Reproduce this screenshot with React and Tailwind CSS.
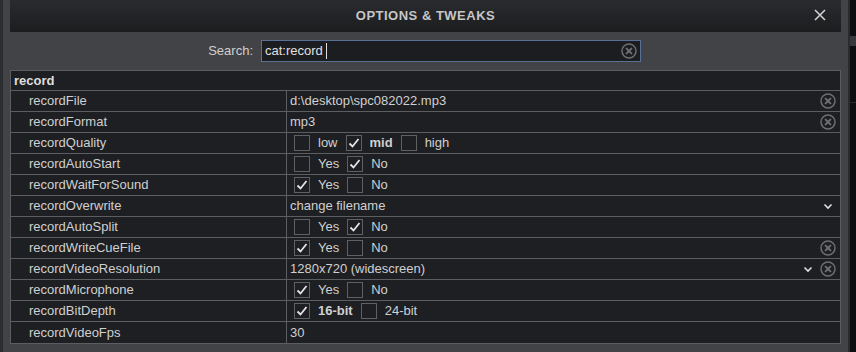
import React from "react";

const FONT = { fontFamily: '"Liberation Sans", Arial, sans-serif' };

function ClearIcon() {
  return (
    <svg width="16" height="16" viewBox="0 0 16 16" className="shrink-0">
      <circle cx="8" cy="8" r="7" fill="none" stroke="#6e6e70" strokeWidth="1.5" />
      <path d="M5.6 5.6 L10.4 10.4 M10.4 5.6 L5.6 10.4" stroke="#6e6e70" strokeWidth="2" strokeLinecap="round" />
    </svg>
  );
}

function Chevron() {
  return (
    <svg width="10" height="7" viewBox="0 0 10 7" className="shrink-0">
      <path d="M1.5 1.5 L5 5 L8.5 1.5" fill="none" stroke="#e0e0e0" strokeWidth="1.6" />
    </svg>
  );
}

function Box({ checked }) {
  return (
    <span className="w-[16px] h-[16px] border border-[#5f6064] flex items-center justify-center shrink-0">
      {checked && (
        <svg width="12" height="12" viewBox="0 0 12 12">
          <path d="M1.5 6.5 L4.5 9.5 L10.5 2" fill="none" stroke="#e6e6e6" strokeWidth="1.8" />
        </svg>
      )}
    </span>
  );
}

function Checks({ items }) {
  return (
    <div className="flex items-center pl-[4px]">
      {items.map((it, i) => (
        <div key={i} className="flex items-center">
          <Box checked={it.c} />
          <span className={"ml-[8px] mr-[8px] " + (it.b ? "font-bold" : "")}>{it.l}</span>
        </div>
      ))}
    </div>
  );
}

const yn = (yes) => [
  { l: "Yes", c: yes, b: false },
  { l: "No", c: !yes, b: false },
];

const rows = [
  { n: "recordFile", v: "d:\\desktop\\spc082022.mp3", clear: true },
  { n: "recordFormat", v: "mp3", clear: true },
  {
    n: "recordQuality",
    checks: [
      { l: "low", c: false },
      { l: "mid", c: true, b: true },
      { l: "high", c: false },
    ],
  },
  { n: "recordAutoStart", checks: yn(false) },
  { n: "recordWaitForSound", checks: yn(true) },
  { n: "recordOverwrite", v: "change filename", chev: true },
  { n: "recordAutoSplit", checks: yn(false) },
  { n: "recordWriteCueFile", checks: yn(true), clear: true },
  { n: "recordVideoResolution", v: "1280x720 (widescreen)", chev: true, clear: true },
  { n: "recordMicrophone", checks: yn(true) },
  {
    n: "recordBitDepth",
    checks: [
      { l: "16-bit", c: true, b: true },
      { l: "24-bit", c: false, b: false },
    ],
  },
  { n: "recordVideoFps", v: "30" },
];

export default function App() {
  return (
    <div className="w-[856px] h-[352px] flex bg-[#0d0e10] overflow-hidden text-[13px] text-[#d0d0d0]" style={FONT}>
      <div className="w-[3px] bg-[#2c2d31]" />
      <div className="w-[845px] bg-[#424347] px-[7px] flex flex-col">
        <div className="h-[32px] bg-gradient-to-b from-[#2a2b2e] to-[#1c1d1f] flex items-center relative">
          <div className="flex-1 text-center font-bold text-[13px] tracking-[0.5px] text-[#c6c6c6]">OPTIONS &amp; TWEAKS</div>
          <div className="absolute right-[14px] top-[8px]">
            <svg width="14" height="14" viewBox="0 0 14 14">
              <path d="M2 2 L12 12 M12 2 L2 12" stroke="#cfcfcf" strokeWidth="1.6" />
            </svg>
          </div>
        </div>
        <div className="h-[38px] flex items-center">
          <div className="w-[251px] text-right text-[#d0d0d0] pr-[8px]">Search:</div>
          <div className="w-[380px] h-[22px] bg-[#1c1d20] border border-[#5b7096] flex items-center pl-[3px] pr-[3px]">
            <span className="text-[#e0e0e0]">cat:record</span>
            <span className="ml-[3px] w-[1px] h-[16px] bg-[#e0e0e0]" />
            <div className="flex-1" />
            <ClearIcon />
          </div>
        </div>
        <div className="border border-[#5c5d61] bg-[#1e1f22]">
          <div className="h-[20px] flex items-center pl-[3px] font-bold text-[#dedede] border-b border-[#5c5d61]">record</div>
          {rows.map((r, i) => (
            <div key={i} className={"h-[21px] flex " + (i < rows.length - 1 ? "border-b border-[#5c5d61]" : "")}>
              <div className="w-[276px] border-r border-[#5c5d61] pl-[18px] flex items-center">{r.n}</div>
              <div className="flex-1 flex items-center pl-[3px] pr-[4px]">
                {r.checks ? <Checks items={r.checks} /> : <span>{r.v}</span>}
                <div className="flex-1" />
                {r.chev && <span className={r.clear ? "mr-[7px]" : "mr-[3px]"}><Chevron /></span>}
                {r.clear && <ClearIcon />}
              </div>
            </div>
          ))}
        </div>
      </div>
      <div className="flex-1 flex">
        <div className="w-[2px] bg-[#2a2b2e]" />
        <div className="flex-1 flex flex-col">
          <div className="h-[36px]" />
          <div className="h-[10px] bg-[#38393c]" />
          <div className="h-[56px]" />
          <div className="h-[1px] bg-[#2a2b2e]" />
        </div>
      </div>
    </div>
  );
}
